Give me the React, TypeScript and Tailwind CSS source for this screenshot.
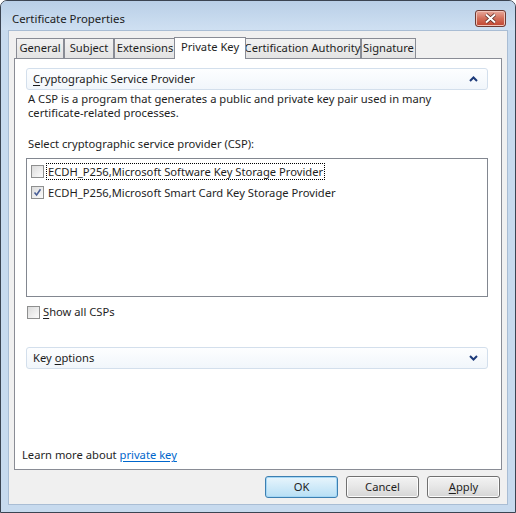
import React from "react";

const FONT = { fontFamily: '"Noto Sans", "Open Sans", sans-serif' };

function CheckBox({ checked = false }: { checked?: boolean }) {
  return (
    <span className="relative flex h-[13px] w-[13px] shrink-0 items-center justify-center border border-[#8e8f8f] bg-gradient-to-br from-[#dcdcdc] to-[#fbfbfb]">
      <span className="absolute inset-[2px] bg-gradient-to-br from-[#e1e1e1] to-[#f7f7f7]" />
      {checked && (
        <svg width="9" height="9" viewBox="0 0 9 9" className="relative">
          <path d="M1.5 4.5 L3.6 7 L7.5 1.2" fill="none" stroke="#4a5f97" strokeWidth="1.6" />
        </svg>
      )}
    </span>
  );
}

function Chevron({ up }: { up?: boolean }) {
  return (
    <svg width="9" height="6" viewBox="0 0 9 6">
      <path
        d={up ? "M1 5 L4.5 1.5 L8 5" : "M1 1 L4.5 4.5 L8 1"}
        fill="none"
        stroke="#1d3a7a"
        strokeWidth="2"
      />
    </svg>
  );
}

function Expander({ title, hot, up }: { title: string; hot: number; up?: boolean }) {
  return (
    <div className="flex h-[22px] items-center justify-between rounded-[3px] border border-[#d3dfec] bg-gradient-to-b from-[#fdfeff] to-[#f1f6fb] pl-[6px] pr-[9px]">
      <span className="text-[#1b1b1b]">
        {title.slice(0, hot)}
        <span className="underline underline-offset-2">{title[hot]}</span>
        {title.slice(hot + 1)}
      </span>
      <Chevron up={up} />
    </div>
  );
}

function Tab({ label, w, active }: { label: string; w: number; active?: boolean }) {
  if (active) {
    return (
      <div
        className="relative z-10 -mx-[2px] -mb-px flex h-[22px] items-center justify-center whitespace-nowrap border border-b-0 border-[#898c95] bg-white pb-[2px]"
        style={{ width: w }}
      >
        {label}
      </div>
    );
  }
  return (
    <div
      className="flex h-[20px] items-center justify-center whitespace-nowrap border border-b-0 border-[#898c95] bg-gradient-to-b from-[#f2f2f2] to-[#e3e3e3]"
      style={{ width: w }}
    >
      {label}
    </div>
  );
}

function Btn({ label, hot, primary }: { label: string; hot?: number; primary?: boolean }) {
  return (
    <div
      className={
        primary
          ? "flex h-[22px] w-[73px] items-center justify-center rounded-[3px] border border-[#3c7fb1] bg-gradient-to-b from-[#e8f5fc] to-[#b7dff5] shadow-[inset_0_0_0_1px_#a5d7f5]"
          : "flex h-[22px] w-[73px] items-center justify-center rounded-[3px] border border-[#707070] bg-gradient-to-b from-[#f3f3f3] via-[#e6e6e6] to-[#d5d5d5] shadow-[inset_0_0_0_1px_#fcfcfc]"
      }
    >
      {hot === undefined ? (
        label
      ) : (
        <span>
          {label.slice(0, hot)}
          <span className="underline underline-offset-2">{label[hot]}</span>
          {label.slice(hot + 1)}
        </span>
      )}
    </div>
  );
}

export default function App() {
  return (
    <div
      className="flex h-[513px] w-[516px] flex-col overflow-hidden rounded-t-[7px] border border-[#3b4452] bg-[#c7daee] text-[11.2px] text-[#1e1e1e]"
      style={FONT}
    >
      {/* title bar */}
      <div className="flex h-[29px] shrink-0 items-start justify-between bg-gradient-to-b from-[#b9cfe7] to-[#cfe0f2] pl-[11px] pr-[9px]">
        <span className="mt-[10px] text-[11.4px] leading-[15px] text-[#1c1c1c]">Certificate Properties</span>
        <div className="mt-[9px] flex h-[17px] w-[31px] items-center justify-center rounded-[3px] border border-[#6d3a33] bg-gradient-to-b from-[#e8a99c] via-[#d26e5a] to-[#c0432f] shadow-[inset_0_0_0_1px_#f1c3b9]">
          <svg width="13" height="11" viewBox="0 0 13 11">
            <path d="M2 1.5 L11 9.5 M11 1.5 L2 9.5" stroke="#5a2a23" strokeWidth="3.6" />
            <path d="M2 1.5 L11 9.5 M11 1.5 L2 9.5" stroke="#ffffff" strokeWidth="2" />
          </svg>
        </div>
      </div>

      {/* client area */}
      <div className="mx-[7px] mb-[7px] flex flex-1 flex-col border border-[#a9bdd4] bg-[#f0f0f0] px-[5px] pt-[5px]">
        <div className="flex h-[22px] items-end pl-[2px]">
          <Tab label="General" w={48} />
          <Tab label="Subject" w={50} />
          <Tab label="Extensions" w={62} />
          <Tab label="Private Key" w={72} active />
          <Tab label="Certification Authority" w={117} />
          <Tab label="Signature" w={55} />
        </div>

        <div className="flex h-[412px] flex-col border border-[#898c95] bg-white pl-[11px] pr-[13px] pt-[9px]">
          <Expander title="Cryptographic Service Provider" hot={0} up />
          <p className="mt-[2px] pl-[2px] leading-[14px]">
            A CSP is a program that generates a public and private key pair used in many
            <br />
            certificate-related processes.
          </p>
          <p className="mt-[16px] pl-[2px] leading-[15px]">Select cryptographic service provider (CSP):</p>

          <div className="mt-[7px] flex h-[139px] flex-col border border-[#828790] bg-white pl-[4px] pt-[2px]">
            <div className="flex h-[21px] items-center gap-[2px]">
              <CheckBox />
              <span className="border border-dotted border-black px-px leading-[15px]">
                ECDH_P256,Microsoft Software Key Storage Provider
              </span>
            </div>
            <div className="flex h-[21px] items-center gap-[2px]">
              <CheckBox checked />
              <span className="border border-transparent px-px leading-[15px]">
                ECDH_P256,Microsoft Smart Card Key Storage Provider
              </span>
            </div>
          </div>

          <div className="mt-[8px] flex h-[15px] items-center gap-[3px] pl-px">
            <CheckBox />
            <span>
              <span className="underline underline-offset-2">S</span>how all CSPs
            </span>
          </div>

          <div className="mt-[27px]">
            <Expander title="Key options" hot={4} />
          </div>

          <div className="flex-1" />
          <p className="mb-[7px] -ml-[4px] leading-[15px]">
            Learn more about{" "}
            <span className="text-[#0066cc] underline underline-offset-2">private key</span>
          </p>
        </div>

        <div className="flex flex-1 items-start justify-end gap-[8px] pr-[2px] pt-[6px]">
          <Btn label="OK" primary />
          <Btn label="Cancel" />
          <Btn label="Apply" hot={0} />
        </div>
      </div>
    </div>
  );
}
